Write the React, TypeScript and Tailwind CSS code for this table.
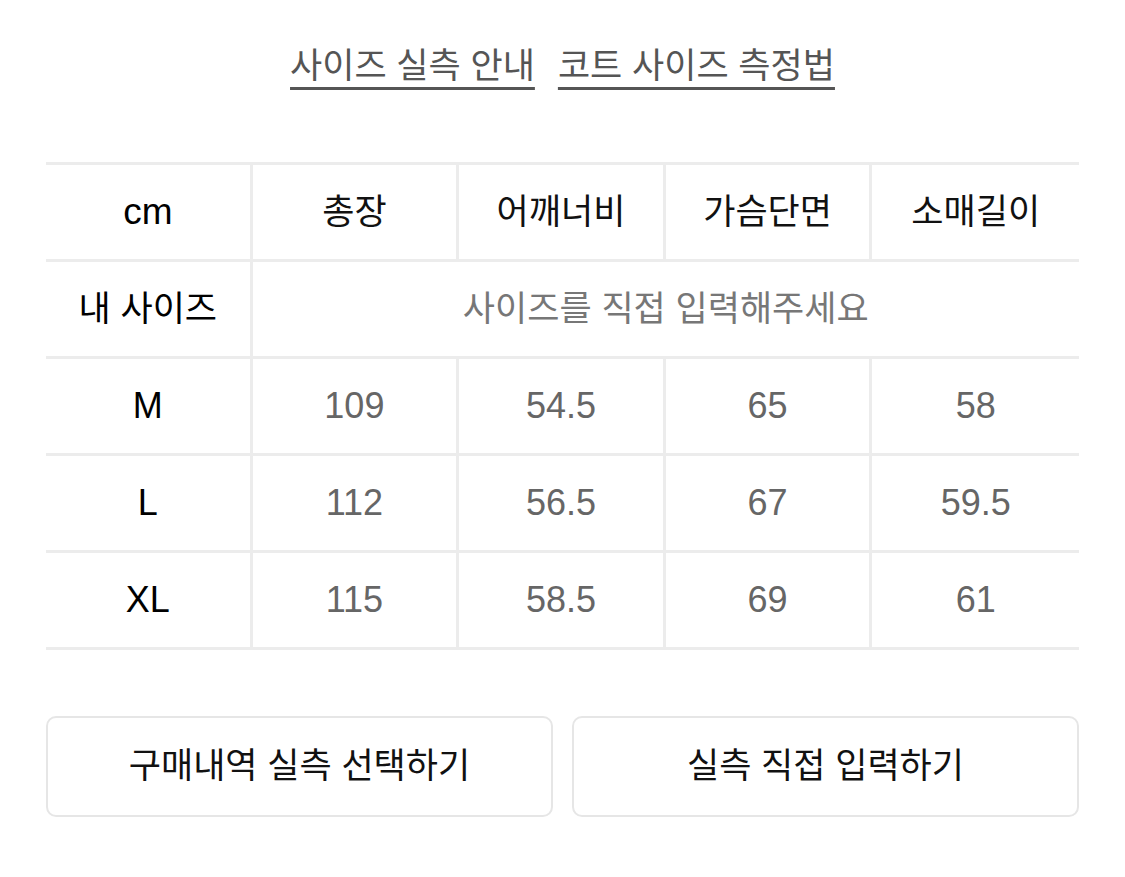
const columns = ["총장", "어깨너비", "가슴단면", "소매길이"]

const rows = [
  { size: "M", values: ["109", "54.5", "65", "58"] },
  { size: "L", values: ["112", "56.5", "67", "59.5"] },
  { size: "XL", values: ["115", "58.5", "69", "61"] },
]

const font = { fontFamily: '"Liberation Sans", "Noto Sans CJK KR", sans-serif' }

export default function App() {
  return (
    <div className="min-h-[877px] w-[1125px] bg-white px-[46px]" style={font}>
      <div className="flex h-[135px] items-start justify-center gap-[23px] pt-[41px] text-[35px] text-[#555555]">
        <a className="underline decoration-[3px] underline-offset-[9px] leading-[50px]">사이즈 실측 안내</a>
        <a className="underline decoration-[3px] underline-offset-[9px] leading-[50px]">코트 사이즈 측정법</a>
      </div>

      <div className="mt-[27px] border-t-[3px] border-[#ececec]">
        <div className="grid h-[97px] grid-cols-5 border-b-[3px] border-[#ececec]">
          <div className="flex items-center justify-center border-r-[3px] border-[#ececec] text-[37px] text-black">cm</div>
          {columns.map((c, i) => (
            <div
              key={c}
              className={`flex items-center justify-center text-[35px] text-[#111111] ${i < 3 ? "border-r-[3px] border-[#ececec]" : ""}`}
            >
              {c}
            </div>
          ))}
        </div>

        <div className="grid h-[97px] grid-cols-5 border-b-[3px] border-[#ececec]">
          <div className="flex items-center justify-center border-r-[3px] border-[#ececec] text-[35px] text-black">내 사이즈</div>
          <div className="col-span-4 flex items-center justify-center text-[35px] text-[#777777]">사이즈를 직접 입력해주세요</div>
        </div>

        {rows.map((r) => (
          <div key={r.size} className="grid h-[97px] grid-cols-5 border-b-[3px] border-[#ececec]">
            <div className="flex items-center justify-center border-r-[3px] border-[#ececec] text-[36px] text-black">{r.size}</div>
            {r.values.map((v, i) => (
              <div
                key={i}
                className={`flex items-center justify-center text-[36px] text-[#666666] ${i < 3 ? "border-r-[3px] border-[#ececec]" : ""}`}
              >
                {v}
              </div>
            ))}
          </div>
        ))}
      </div>

      <div className="mt-[66px] grid grid-cols-2 gap-[19px]">
        <button className="flex h-[101px] items-center justify-center rounded-[10px] border-2 border-[#e6e6e6] bg-white text-[35px] text-[#111111]">
          구매내역 실측 선택하기
        </button>
        <button className="flex h-[101px] items-center justify-center rounded-[10px] border-2 border-[#e6e6e6] bg-white text-[35px] text-[#111111]">
          실측 직접 입력하기
        </button>
      </div>
    </div>
  )
}
